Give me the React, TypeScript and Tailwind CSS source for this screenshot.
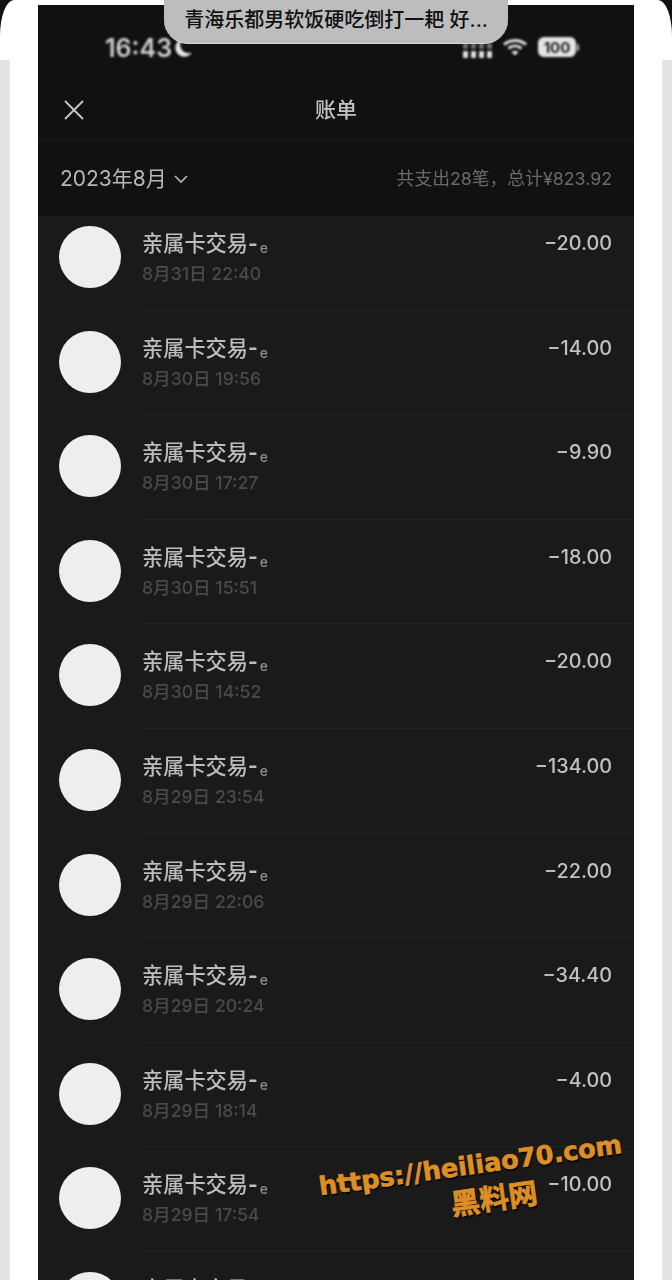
import React from "react";

const rows = [
  { date: "8月31日 22:40", amount: "−20.00" },
  { date: "8月30日 19:56", amount: "−14.00" },
  { date: "8月30日 17:27", amount: "−9.90" },
  { date: "8月30日 15:51", amount: "−18.00" },
  { date: "8月30日 14:52", amount: "−20.00" },
  { date: "8月29日 23:54", amount: "−134.00" },
  { date: "8月29日 22:06", amount: "−22.00" },
  { date: "8月29日 20:24", amount: "−34.40" },
  { date: "8月29日 18:14", amount: "−4.00" },
  { date: "8月29日 17:54", amount: "−10.00" },
  { date: "8月29日 12:30", amount: "−16.00" },
];

const Row = ({ date, amount }: { date: string; amount: string }) => (
  <div className="flex h-[104.6px] shrink-0 pl-[21px]">
    <div className="mt-[20px] h-[62px] w-[62px] shrink-0 rounded-full bg-[#eeeeee]" />
    <div className="ml-[21px] flex flex-1 border-b border-[#232323] pr-[22px]">
      <div className="flex-1 pt-[21px]">
        <div className="flex h-[32px] items-center text-[21.2px] font-medium leading-[32px] text-[#bdbdbd] blur-[0.4px]">
          亲属卡交易
          <span className="text-[21px] font-bold leading-none">-</span>
          <span className="ml-[2px] mt-[10px] text-[14px] leading-none text-[#8f8f8f]">e</span>
        </div>
        <div className="mt-[3px] text-[17.6px] font-medium leading-[24px] text-[#4a4a4a] blur-[0.4px]">{date}</div>
      </div>
      <div className="pt-[22px] text-[19.8px] font-medium leading-[30px] text-[#c0c0c0] blur-[0.4px]">{amount}</div>
    </div>
  </div>
);

export default function App() {
  return (
    <div className="relative h-[1280px] w-[672px] overflow-hidden bg-[#111111] font-['Inter','Noto_Sans_CJK_SC',sans-serif]">
      {/* phone frame */}
      <div className="absolute inset-0 rounded-tl-[14px_36px] rounded-tr-[14px_36px] bg-white" />
      <div className="absolute bottom-0 left-0 top-[60px] w-[10px] bg-[#e4e4e8]" />
      <div className="absolute bottom-0 right-0 top-[60px] w-[10px] bg-[#e4e4e8]" />

      <div className="absolute bottom-0 left-[38px] top-[5px] flex w-[596px] flex-col bg-[#111111]">
        {/* status bar */}
        <div className="flex h-[75px] shrink-0 items-start justify-between pl-[67px] pr-[55px] pt-[29px] blur-[0.8px]">
          <div className="flex items-center gap-[1px]">
            <span className="text-[25px] font-semibold leading-[28px] text-[#d0d0d0]">16:43</span>
            <svg width="20" height="20" viewBox="0 0 17 18">
              <path d="M8 1a8 8 0 1 0 8.500 12A7.500 7.500 0 0 1 8 1z" fill="#e8e8e8" />
            </svg>
          </div>
          <div className="flex items-center gap-[8px] pt-[1px]">
            <svg width="32" height="24" viewBox="0 0 32 24" fill="#e0e0e0">
              <rect x="1" y="16" width="5" height="7" rx="1" />
              <rect x="9" y="16" width="5" height="7" rx="1" />
              <rect x="17" y="16" width="5" height="7" rx="1" />
              <rect x="25" y="16" width="5" height="7" rx="1" />
              <g opacity="0.45">
                <rect x="1" y="8" width="5" height="6" rx="1" />
                <rect x="9" y="8" width="5" height="6" rx="1" />
                <rect x="17" y="8" width="5" height="6" rx="1" />
                <rect x="25" y="8" width="5" height="6" rx="1" />
              </g>
            </svg>
            <svg width="26" height="20" viewBox="0 0 26 20" fill="none" stroke="#e0e0e0" strokeWidth="3">
              <path d="M2 7.500c6.500-5.500 15.500-5.500 22 0" />
              <path d="M6.500 11.500c4-3.300 9-3.300 13 0" />
              <path d="M13 18.500l-3.500-3.600c2-1.500 5-1.500 7 0z" fill="#e0e0e0" stroke="none" />
            </svg>
            <div className="ml-[2px] flex items-center">
              <div className="flex h-[20px] w-[38px] items-center justify-center rounded-[6px] bg-[#e4e4e4] text-[15px] font-bold leading-none text-[#222222]">
                100
              </div>
              <div className="ml-[1px] h-[7px] w-[2px] rounded-r-full bg-[#bbbbbb]" />
            </div>
          </div>
        </div>

        {/* nav */}
        <div className="relative flex h-[61px] shrink-0 items-center justify-center border-b border-[#1c1c1c]">
          <svg className="absolute left-[25px] top-[19px]" width="22" height="22" viewBox="0 0 22 22" fill="none" stroke="#c8c8c8" strokeWidth="1.800">
            <path d="M2 2l18 18M20 2L2 20" />
          </svg>
          <span className="text-[21px] font-medium leading-[28px] text-[#c4c4c4] blur-[0.4px]">账单</span>
        </div>

        {/* month bar */}
        <div className="flex h-[75px] shrink-0 items-center justify-between px-[22px] blur-[0.4px]">
          <div className="flex items-center gap-[6px]">
            <span className="text-[21px] leading-[28px] text-[#b8b8b8]">2023年8月</span>
            <svg width="16" height="10" viewBox="0 0 16 10" fill="none" stroke="#b8b8b8" strokeWidth="1.600">
              <path d="M2 2l6 6 6-6" />
            </svg>
          </div>
          <span className="text-[17.800px] leading-[24px] text-[#6a6a6a]">共支出28笔，总计¥823.92</span>
        </div>

        {/* list, first row is scrolled 10px under the month bar */}
        <div className="flex-1 overflow-hidden bg-[#1a1a1a]">
          <div className="-mt-[10px] flex flex-col">
            {rows.map((r, i) => (
              <Row key={i} date={r.date} amount={r.amount} />
            ))}
          </div>
        </div>
      </div>

      {/* notification pill */}
      <div className="absolute left-[164px] top-0 flex h-[44px] w-[344px] items-center justify-center rounded-b-[24px] border-b border-[#d8d8d8] bg-[#bdbdbd] pb-[4px] text-[20px] font-medium leading-[24px] text-[#111111]">
        青海乐都男软饭硬吃倒打一耙 好...
      </div>

      {/* watermark */}
      <div className="absolute left-[320px] top-[1149px] w-[306px] -rotate-[8deg] text-center font-['DejaVu_Sans','Noto_Sans_CJK_SC',sans-serif] font-bold text-[#dd8f26] [-webkit-text-stroke:0.7px_#dd8f26] [text-shadow:1px_2px_1px_#000]">
        <div className="whitespace-nowrap text-[25.500px] leading-[32px]">https://heiliao70.com</div>
        <div className="mt-[4px] pl-[38px] text-[29px] leading-[34px]">黑料网</div>
      </div>
    </div>
  );
}
